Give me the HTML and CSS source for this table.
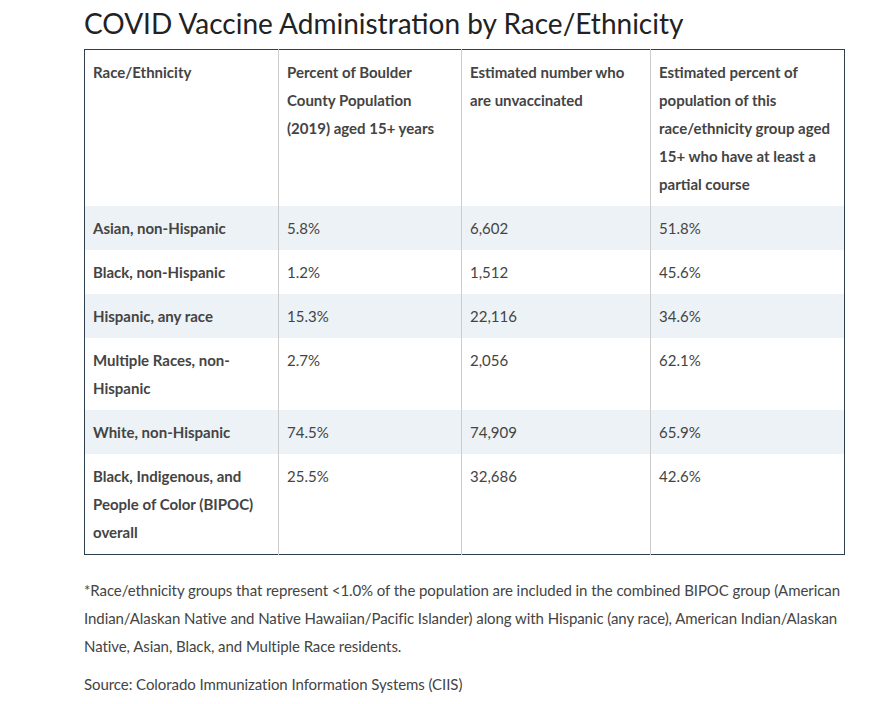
FILE: index.html
```html
<!DOCTYPE html>
<html lang="en">
<head>
<meta charset="utf-8">
<title>COVID Vaccine Administration by Race/Ethnicity</title>
<link rel="stylesheet" href="styles.css">
</head>
<body>
<main class="content">
  <h2 class="title">COVID Vaccine Administration by Race/Ethnicity</h2>
  <table class="data">
    <colgroup>
      <col class="c1"><col class="c2"><col class="c3"><col class="c4">
    </colgroup>
    <thead>
      <tr>
        <th>Race/Ethnicity</th>
        <th>Percent of Boulder County Population (2019) aged 15+ years</th>
        <th>Estimated number who are unvaccinated</th>
        <th>Estimated percent of population of this race/ethnicity group aged 15+ who have at least a partial course</th>
      </tr>
    </thead>
    <tbody>
      <tr><th>Asian, non-Hispanic</th><td>5.8%</td><td>6,602</td><td>51.8%</td></tr>
      <tr><th>Black, non-Hispanic</th><td>1.2%</td><td>1,512</td><td>45.6%</td></tr>
      <tr><th>Hispanic, any race</th><td>15.3%</td><td>22,116</td><td>34.6%</td></tr>
      <tr><th>Multiple Races, non-Hispanic</th><td>2.7%</td><td>2,056</td><td>62.1%</td></tr>
      <tr><th>White, non-Hispanic</th><td>74.5%</td><td>74,909</td><td>65.9%</td></tr>
      <tr><th>Black, Indigenous, and People of Color (BIPOC) overall</th><td>25.5%</td><td>32,686</td><td>42.6%</td></tr>
    </tbody>
  </table>
  <p class="note">*Race/ethnicity groups that represent &lt;1.0% of the population are included in the combined BIPOC group (American Indian/Alaskan Native and Native Hawaiian/Pacific Islander) along with Hispanic (any race), American Indian/Alaskan Native, Asian, Black, and Multiple Race residents.</p>
  <p class="note">Source: Colorado Immunization Information Systems (CIIS)</p>
</main>
</body>
</html>
```

FILE: styles.css
```css
html, body {
  margin: 0;
  padding: 0;
  background: #ffffff;
}

body {
  font-family: Lato, "Open Sans", sans-serif;
  color: #444444;
}

.content {
  width: 760px;
  margin-left: 84px;
  padding-top: 4px;
}

.title {
  margin: 0 0 7px 0;
  font-size: 28px;
  line-height: 38px;
  font-weight: 400;
  color: #222222;
}

.data {
  width: 760px;
  border-collapse: collapse;
  border: 1px solid #2f3e4c;
  table-layout: fixed;
  font-size: 15px;
  line-height: 28px;
}

.c1 { width: 194px; }
.c2 { width: 183px; }
.c3 { width: 189px; }
.c4 { width: 194px; }

.data th,
.data td {
  text-align: left;
  vertical-align: top;
  padding: 8px;
  border-left: 1px solid #cccccc;
}

.data th:first-child {
  border-left: 1px solid #2f3e4c;
}

.data th {
  font-weight: 700;
  color: #444444;
}

.data td {
  font-weight: 400;
}

.data tbody tr:nth-child(odd) {
  background: #edf2f6;
}

.note {
  margin: 21px 0 0 0;
  font-size: 15px;
  line-height: 28px;
  letter-spacing: -0.07px;
  color: #444444;
}

.note + .note {
  margin-top: 10px;
}
```
